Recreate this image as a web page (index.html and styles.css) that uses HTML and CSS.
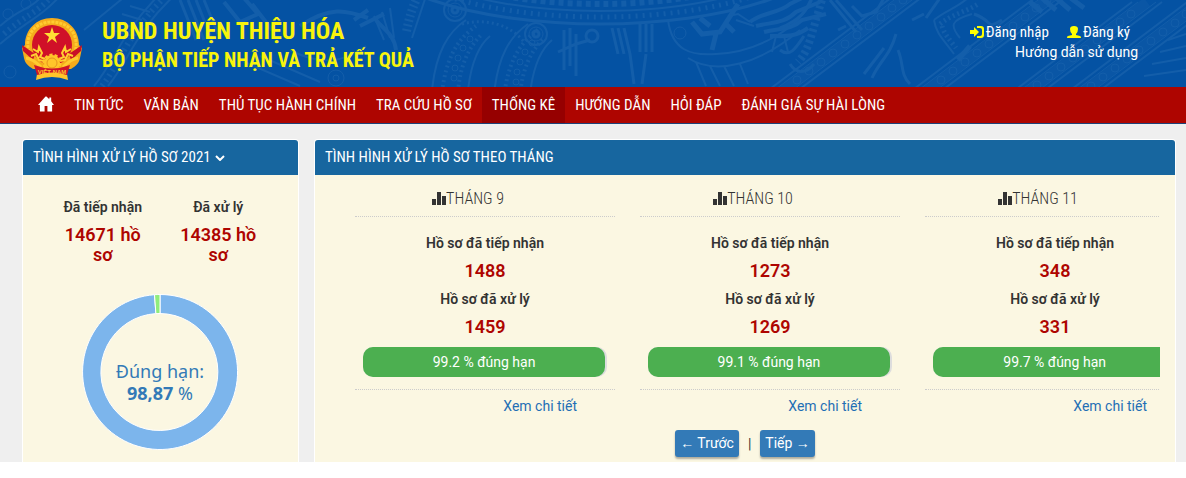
FILE: index.html
```html
<!DOCTYPE html>
<html lang="vi">
<head>
  <meta charset="UTF-8" />
  <meta name="viewport" content="width=device-width, initial-scale=1.0" />
  <title>UBND Huyện Thiệu Hóa</title>
  <link rel="stylesheet" href="styles.css">
</head>
<body>

  <header class="header">
    <svg class="drum" viewBox="0 0 1186 87" preserveAspectRatio="xMidYMin slice" aria-hidden="true">
      <defs>
        <g id="disc">
          <circle r="11" stroke-width="2" /><circle r="7" /><circle r="3" stroke-width="3" />
        </g>
        <g id="plume">
          <path d="M-14 58C-10 20 2 0 20-12M22 58C25 32 32 14 44 4" stroke-width="2" />
          <path d="M-4 60C0 28 10 8 30-6M12 60C14 34 22 16 36 2" stroke-width="4" stroke-dasharray="2 3" />
          <circle cx="8" cy="46" r="3" /><circle cx="9" cy="36" r="3" /><circle cx="12" cy="26" r="3" /><circle cx="17" cy="16" r="3" /><circle cx="24" cy="7" r="3" />
        </g>
        <g id="bird">
          <path d="M0 30C12 20 28 22 40 12L64 0M6 34C22 30 34 32 46 20L70 10M14 40C28 36 42 38 52 28L76 22M20 44C34 44 44 46 58 36" stroke-width="4" />
          <path d="M0 30L-12 22L-22 24M4 34L-14 28M26 44L22 60M34 44L38 60" stroke-width="2" />
        </g>
        <!-- diagonal band with a row of rings -->
        <g id="band">
          <path d="M134-12L-4 92M164-12L26 92" stroke-width="2" />
          <path d="M140-12L2 92M158-12L20 92" />
          <path d="M149-12L11 92" stroke-width="10" opacity="0.4" />
          <circle cx="133" cy="0" r="4" /><circle cx="122" cy="8" r="4" /><circle cx="111" cy="17" r="4" /><circle cx="99" cy="26" r="4" /><circle cx="87" cy="35" r="4" /><circle cx="75" cy="44" r="4" /><circle cx="63" cy="53" r="4" /><circle cx="51" cy="62" r="4" /><circle cx="39" cy="71" r="4" /><circle cx="27" cy="80" r="4" />
        </g>
      </defs>
      <!-- bronze drum rim -->
      <ellipse cx="600" cy="-58" rx="238" ry="82" stroke-width="3" />
      <ellipse cx="600" cy="-58" rx="222" ry="75" stroke-width="5" stroke-dasharray="2 5" />
      <ellipse cx="600" cy="-58" rx="208" ry="69" stroke-width="2" />
      <ellipse cx="600" cy="-58" rx="195" ry="62" stroke-width="6" stroke-dasharray="5 4" />
      <ellipse cx="600" cy="-58" rx="180" ry="56" />
      <use href="#disc" x="455" y="10" /><use href="#disc" x="536" y="34" />
      <use href="#plume" x="446" y="32" /><use href="#plume" x="508" y="36" />
      <path d="M462 24C485 18 510 24 524 42" stroke-width="3" stroke-dasharray="2 3" />
      <path d="M564 30v40M570 28v38M576 34v42M558 52l18-8l14-4" stroke-width="3" />
      <circle cx="592" cy="36" r="6" stroke-width="3" />
      <path d="M612 28l6 26M618 28l6 26M624 28l6 26M640 24v28M646 24v28M652 24v28M630 54l4 30M646 54l-4 30" stroke-width="3" />
      <path d="M668 20C672 50 690 56 716 54C760 52 800 26 812 0M688 58C716 76 760 64 800 30M696 62l10 24M710 66l10 20M724 66l10 20M740 64l8 20" stroke-width="2" />
      <circle cx="680" cy="33" r="6" />
      <path d="M692 22l10 12l18-2l18-28M700 18l10 8M716 34l-4 16M726 24l8 8" stroke-width="5" />
      <use href="#bird" x="750" y="-8" />
      <!-- left half -->
      <path d="M0 26C22 6 28 12 44-6M0 44C28 20 40 18 62-6M84 30L128-6M94 86C116 60 120 34 160-6M108 86C128 62 136 30 176-6" stroke-width="2" />
      <path d="M4 34C24 16 36 14 52-4M102 86C122 60 128 32 168-6" stroke-width="6" stroke-dasharray="2 4" />
      <circle cx="8" cy="14" r="5" /><circle cx="26" cy="4" r="5" /><circle cx="10" cy="72" r="6" />
      <path d="M180 0l16 40M188 0l16 40M196 0l16 40M204 0l14 34" stroke-width="3" />
      <path d="M112 30l20 6M116 22l20 6M122 14l20 6M130 6l20 6" stroke-width="2" />
      <path d="M224 2l16 20l18-8l-14-16M252 4l20 26M300 26C330 6 346 10 368 18M354 20l14-10M360 26l24-12M376 20C384 30 394 34 396 50" stroke-width="4" />
      <path d="M374 16l10 24M382 12l8 26M390 8l4 30M290 50C320 66 346 62 366 46M240 60l60 26M260 56l60 26" stroke-width="2" />
      <circle cx="336" cy="78" r="8" /><circle cx="336" cy="78" r="3" />
      <path d="M426-4L412 38" stroke-width="2" /><path d="M418-4C410 12 408 24 406 34" stroke-width="9" stroke-dasharray="2 3" />
      <!-- right half -->
      <path d="M822 0C812 30 810 50 798 62" stroke-width="8" stroke-dasharray="3 3" />
      <path d="M780 28C800 20 808 10 812-4M830 0L856 32M836 0L862 30M852 6l10 10l14-4l8-14M838 30l8-4M780 50c10 8 16-2 24-14M790 64c6 10 16 10 24 0" stroke-width="3" />
      <use href="#band" x="770" y="0" />
      <path d="M896 34C890 56 880 60 872 78M898 50c6 14 2 24 12 34M884 48l-20 26" stroke-width="3" />
      <path d="M934 20C946 10 958 8 970-4M934 20C936 34 944 40 954 54M972 14C950 20 950 26 960 38" stroke-width="2" />
      <path d="M940 24C952 14 966 12 978 4M942 26C944 34 950 40 956 48" stroke-width="5" stroke-dasharray="2 3" />
      <path d="M974 14C996 22 984 30 1002 20M940-2l-14 20M912 20l12-6" stroke-width="3" />
      <use href="#band" x="914" y="0" />
      <path d="M1030 2l12 10M1042-2l14 12M1054-4l16 14M1068-4l16 12M970 46l-12 14" stroke-width="5" />
      <use href="#band" x="998" y="14" />
      <use href="#band" x="1064" y="6" />
      <path d="M1186 34l-18 6M1186 46l-26 6M1186 58l-34 6M1186 70l-42 6" stroke-width="2" />
    </svg>

    <svg class="emblem" viewBox="0 0 60 62" role="img" aria-label="Quốc huy Việt Nam">
      <path d="M30 0C46 0 57 12 57 27l3 3-2 10c-1 5-4 8-9 11H11C6 48 3 45 2 40L0 30l3-3C3 12 14 0 30 0z" fill="#f4ab1c" />
      <path d="M7 34C2 16 14 4 30 4s28 12 23 30" fill="none" stroke="#ffcb30" stroke-width="3" stroke-dasharray="3 1" />
      <circle cx="30" cy="27" r="20" fill="#d01028" />
      <path d="M30 9l2 6h6l-5 4 2 6-5-4-5 4 2-6-5-4h6z" fill="#ffdf35" />
      <path d="M0 27l13 9-2 6L1 33zM60 27l-13 9 2 6 10-9z" fill="#c90f27" />
      <path d="M11 31l5 3 1-5 3 6-2 4 5 2M9 38l5-2 3 6 5 1M49 31l-5 3-1-5-3 6 2 4-5 2M51 38l-5-2-3 6-5 1" fill="none" stroke="#ffcf31" stroke-width="2" />
      <circle cx="30" cy="45" r="8" fill="#ffc52a" stroke="#ffc52a" stroke-width="3" stroke-dasharray="3 2" />
      <circle cx="30" cy="45" r="5" fill="none" stroke="#e7941d" />
      <path d="M4 40c7 1 11 5 15 9M56 40c-7 1-11 5-15 9" fill="none" stroke="#ffcb30" stroke-width="3" />
      <path d="M16 50q14 5 28 0l2 12q-16-6-32 0z" fill="#ffc52a" />
      <path d="M12 47q18 7 36 0l-3 10q-15-5-30 0z" fill="#cf1428" />
      <text x="30" y="56" class="emblem-text">VIỆT NAM</text>
    </svg>

    <div class="site-name">
      <h1>UBND HUYỆN THIỆU HÓA</h1>
      <h2>BỘ PHẬN TIẾP NHẬN VÀ TRẢ KẾT QUẢ</h2>
    </div>

    <div class="account">
      <div class="account-links">
        <a href="#">
          <svg class="icon" viewBox="0 0 14 12" aria-hidden="true"><path d="M0 4h4V1l5 5-5 5V8H0zM7 0h4q3 0 3 3v6q0 3-3 3H7v-2h3q2 0 2-2V4q0-2-2-2H7z" /></svg>
          Đăng nhập
        </a>
        <a href="#">
          <svg class="icon" viewBox="0 0 14 12" aria-hidden="true"><path d="M3 3q0-3 4-3t4 3q0 3-2 5v1l4 1q1 0 1 2H0q0-2 1-2l4-1V8Q3 6 3 3z" /></svg>
          Đăng ký
        </a>
      </div>
      <a class="guide" href="#">Hướng dẫn sử dụng</a>
    </div>
  </header>

  <nav class="menu">
    <a href="#" aria-label="Trang chủ"><svg class="home" viewBox="0 0 17 16" aria-hidden="true"><path d="M8 0h1l3 3V1h2v4l3 4h-2v7h-5v-6H7v6H2V9H0z" /></svg></a>
    <a href="#">TIN TỨC</a>
    <a href="#">VĂN BẢN</a>
    <a href="#">THỦ TỤC HÀNH CHÍNH</a>
    <a href="#">TRA CỨU HỒ SƠ</a>
    <a href="#" class="active">THỐNG KÊ</a>
    <a href="#">HƯỚNG DẪN</a>
    <a href="#">HỎI ĐÁP</a>
    <a href="#">ĐÁNH GIÁ SỰ HÀI LÒNG</a>
  </nav>

  <main class="content">
    <section class="panel">
      <h3 class="panel-title">
        <button type="button" class="year">TÌNH HÌNH XỬ LÝ HỒ SƠ 2021
          <svg class="chevron" viewBox="0 0 10 6" aria-hidden="true"><path d="M1 1l4 4 4-4" /></svg>
        </button>
      </h3>
      <div class="totals">
        <div>
          <strong>Đã tiếp nhận</strong>
          <p class="number">14671 hồ sơ</p>
        </div>
        <div>
          <strong>Đã xử lý</strong>
          <p class="number">14385 hồ sơ</p>
        </div>
      </div>
      <svg class="donut" viewBox="0 0 156 156" role="img" aria-label="Đúng hạn: 98,87 %">
        <path d="M78 0.5A77.5 77.5 0 1 1 72.5 0.7L73.9 19.6A58.5 58.5 0 1 0 78 19.5Z" fill="#7cb5ec" stroke="#fff" />
        <path d="M72.5 0.7A77.5 77.5 0 0 1 78 0.5V19.5A58.5 58.5 0 0 0 73.9 19.6Z" fill="#90ed7d" stroke="#fff" />
        <text x="78" y="84">Đúng hạn:</text>
        <text x="78" y="106"><tspan class="percent">98,87</tspan> %</text>
      </svg>
    </section>

    <section class="panel">
      <h3 class="panel-title">TÌNH HÌNH XỬ LÝ HỒ SƠ THEO THÁNG</h3>
      <div class="months">
        <article class="month">
          <h4><svg class="chart" viewBox="0 0 14 14" aria-hidden="true"><path d="M0 8h4v6H0zM5 1h4v13H5zM10 5h4v9h-4z" /></svg>THÁNG 9</h4>
          <div class="month-body">
            <strong>Hồ sơ đã tiếp nhận</strong>
            <p class="number">1488</p>
            <strong>Hồ sơ đã xử lý</strong>
            <p class="number">1459</p>
            <div class="progress"><div class="bar" style="width: 99.2%">99.2 % đúng hạn</div></div>
          </div>
          <a class="detail" href="#">Xem chi tiết</a>
        </article>
        <article class="month">
          <h4><svg class="chart" viewBox="0 0 14 14" aria-hidden="true"><path d="M0 8h4v6H0zM5 1h4v13H5zM10 5h4v9h-4z" /></svg>THÁNG 10</h4>
          <div class="month-body">
            <strong>Hồ sơ đã tiếp nhận</strong>
            <p class="number">1273</p>
            <strong>Hồ sơ đã xử lý</strong>
            <p class="number">1269</p>
            <div class="progress"><div class="bar" style="width: 99.1%">99.1 % đúng hạn</div></div>
          </div>
          <a class="detail" href="#">Xem chi tiết</a>
        </article>
        <article class="month">
          <h4><svg class="chart" viewBox="0 0 14 14" aria-hidden="true"><path d="M0 8h4v6H0zM5 1h4v13H5zM10 5h4v9h-4z" /></svg>THÁNG 11</h4>
          <div class="month-body">
            <strong>Hồ sơ đã tiếp nhận</strong>
            <p class="number">348</p>
            <strong>Hồ sơ đã xử lý</strong>
            <p class="number">331</p>
            <div class="progress"><div class="bar" style="width: 99.7%">99.7 % đúng hạn</div></div>
          </div>
          <a class="detail" href="#">Xem chi tiết</a>
        </article>
      </div>
      <div class="pager">
        <button type="button"><span class="arrow">←</span> Trước</button>
        <span>|</span>
        <button type="button">Tiếp <span class="arrow">→</span></button>
      </div>
    </section>
  </main>

</body>
</html>
```

FILE: styles.css
```css
* { box-sizing: border-box; }
body { margin: 0; background: #fff; color: #333; font: 14px/20px Roboto, "Liberation Sans", sans-serif; }
h1, h2, h3, h4, p { margin: 0; }
a { color: #fff; text-decoration: none; }
button { border: none; color: #fff; font: inherit; cursor: pointer; }
strong { font-weight: 600; }

/* header */
.header { position: relative; display: flex; align-items: flex-start; height: 87px; padding: 16px 48px 0 22px; background: #0452a3; overflow: hidden; }
.drum { position: absolute; top: 0; left: 0; width: 100%; height: 100%; fill: none; stroke: #2b70b5; opacity: 0.4; }
.emblem { position: relative; width: 60px; height: 62px; margin: 2px 20px 0 0; }
.emblem-text { font: bold 6px "Liberation Sans", sans-serif; fill: #ffc52a; text-anchor: middle; }
.site-name { position: relative; color: #f8f40c; font-family: "Roboto Condensed", "Liberation Sans Narrow", sans-serif; }
.site-name h1 { font-size: 24px; line-height: 30px; font-weight: 700; }
.site-name h2 { font-size: 20px; line-height: 28px; font-weight: 700; }
.account { position: relative; margin-left: auto; padding-top: 6px; text-align: right; }
.account-links { display: flex; justify-content: flex-end; gap: 18px; padding-right: 8px; font-family: "Roboto Condensed", "Liberation Sans Narrow", sans-serif; font-size: 15px; }
.account-links a { display: flex; align-items: center; gap: 2px; }
.icon { width: 14px; height: 12px; fill: #ff0; }

/* menu */
.menu { display: flex; padding-left: 28px; background: #ae0500; border-bottom: 1px solid #1d4279; font: 15px/36px "Roboto Condensed", "Liberation Sans Narrow", sans-serif; }
.menu a { padding: 0 10px; white-space: nowrap; }
.menu .active { background: #960000; }
.home { display: block; width: 16px; height: 16px; margin: 9px 0; fill: #fff; }

/* panels */
.content { display: grid; grid-template-columns: 277px minmax(0, 1fr); gap: 15px; padding: 15px 10px 0 22px; background: #efefef; }
.panel { background: #fbf7e2; border: 1px solid #fff; border-bottom: none; border-radius: 4px 4px 0 0; overflow: hidden; }
.panel-title { padding: 0 10px; background: #17669f; color: #fff; font: 15px/35px "Roboto Condensed", "Liberation Sans Narrow", sans-serif; }
.year { display: flex; align-items: center; gap: 4px; padding: 0; background: none; }
.chevron { width: 10px; height: 6px; fill: none; stroke: #fff; stroke-width: 2; }
.number { color: #ae0500; font-size: 18px; font-weight: 600; line-height: 20px; }
.totals { display: grid; grid-template-columns: 1fr 1fr; gap: 20px; padding: 22px 32px 0; text-align: center; }
.totals .number { padding-top: 8px; }
.donut { display: block; width: 156px; height: 156px; margin: 29px auto 11px 59px; }
.donut text { fill: #337ab7; font: 18px "Noto Sans", sans-serif; text-anchor: middle; }
.donut .percent { font-weight: 700; }

/* months */
.months { display: flex; gap: 25px; margin: 0 15px 0 40px; overflow: hidden; }
.month { flex: 0 0 260px; text-align: center; }
.month h4 { padding: 14px 34px 7px 0; border-bottom: 1px dotted #ccc; font: 300 16px/20px "Roboto Condensed", "Liberation Sans Narrow", sans-serif; }
.chart { width: 14px; height: 14px; fill: #333; vertical-align: -1px; }
.month-body { padding: 16px 8px 12px; border-bottom: 1px dotted #ccc; }
.month-body .number { padding: 8px 0; line-height: 20px; }
.progress { margin-top: 2px; background: #ddd; border-radius: 10px; }
.bar { background: #4caf50; border-radius: 10px; color: #fff; line-height: 30px; }
.detail { display: block; padding: 6px 38px 0 0; color: #1f6fb5; text-align: right; }
.pager { display: flex; justify-content: center; align-items: center; gap: 9px; padding: 14px 0 5px; }
.pager button { padding: 0 5px; background: #337ab7; border-radius: 3px; box-shadow: 0 2px 2px rgba(0, 0, 0, 0.3); line-height: 27px; }
.arrow { font-family: "Liberation Sans", sans-serif; }
```
